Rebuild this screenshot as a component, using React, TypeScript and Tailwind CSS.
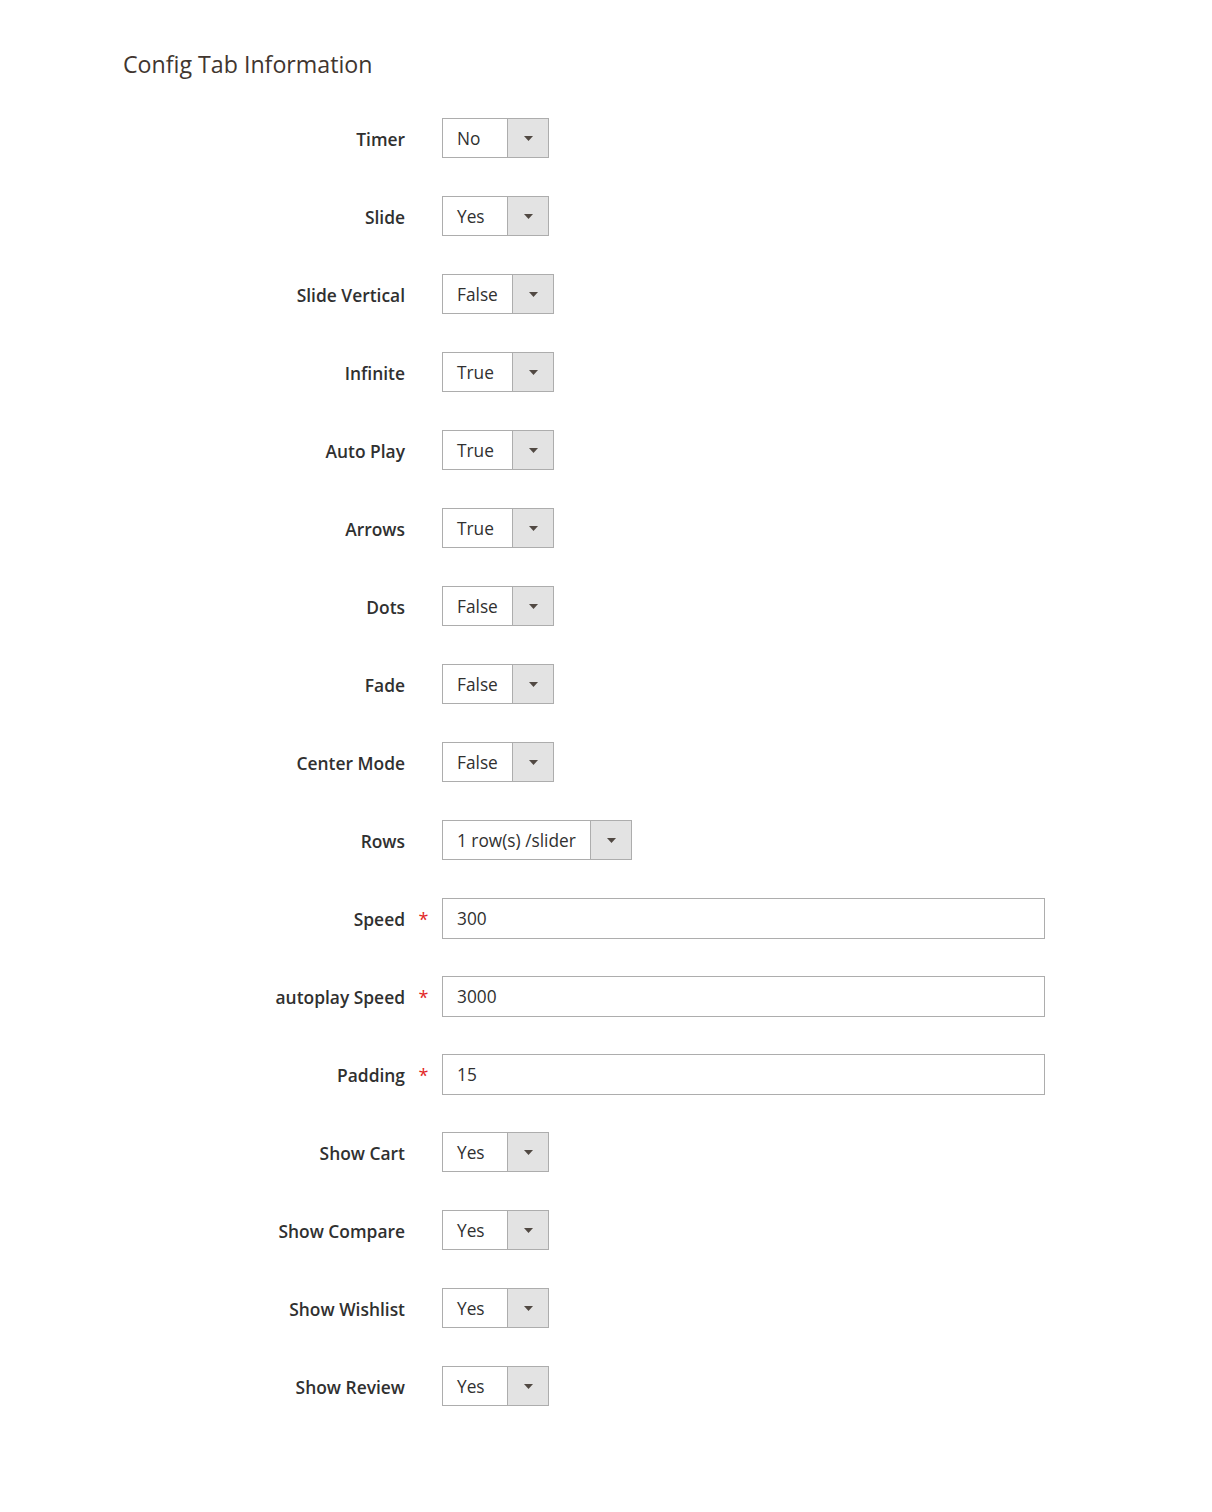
type Field =
  | { label: string; kind: 'select'; value: string; width: string }
  | { label: string; kind: 'input'; value: string; required?: boolean }

const YESNO = 'w-[107px]'
const TRUEFALSE = 'w-[112px]'

const fields: Field[] = [
  { label: 'Timer', kind: 'select', value: 'No', width: YESNO },
  { label: 'Slide', kind: 'select', value: 'Yes', width: YESNO },
  { label: 'Slide Vertical', kind: 'select', value: 'False', width: TRUEFALSE },
  { label: 'Infinite', kind: 'select', value: 'True', width: TRUEFALSE },
  { label: 'Auto Play', kind: 'select', value: 'True', width: TRUEFALSE },
  { label: 'Arrows', kind: 'select', value: 'True', width: TRUEFALSE },
  { label: 'Dots', kind: 'select', value: 'False', width: TRUEFALSE },
  { label: 'Fade', kind: 'select', value: 'False', width: TRUEFALSE },
  { label: 'Center Mode', kind: 'select', value: 'False', width: TRUEFALSE },
  { label: 'Rows', kind: 'select', value: '1 row(s) /slider', width: 'w-[190px]' },
  { label: 'Speed', kind: 'input', value: '300', required: true },
  { label: 'autoplay Speed', kind: 'input', value: '3000', required: true },
  { label: 'Padding', kind: 'input', value: '15', required: true },
  { label: 'Show Cart', kind: 'select', value: 'Yes', width: YESNO },
  { label: 'Show Compare', kind: 'select', value: 'Yes', width: YESNO },
  { label: 'Show Wishlist', kind: 'select', value: 'Yes', width: YESNO },
  { label: 'Show Review', kind: 'select', value: 'Yes', width: YESNO },
]

const SelectBox = ({ value, width }: { value: string; width: string }) => (
  <div className={`flex h-[40px] ${width} border border-[#adadad] bg-white`}>
    <div className="flex flex-1 items-center pl-[14px] pt-[2px] text-[17.3px] text-[#303030]">
      {value}
    </div>
    <div className="flex w-[41px] items-center justify-center border-l border-[#adadad] bg-[#e3e3e3] pt-[1px]">
      <svg width="9" height="5" viewBox="0 0 9 5">
        <path d="M0 0h9L4.5 5z" fill="#514943" />
      </svg>
    </div>
  </div>
)

const TextBox = ({ value }: { value: string }) => (
  <div className="flex h-[41px] w-[603px] shrink-0 items-center border border-[#adadad] bg-white pl-[14px] pt-[2px] text-[17.3px] text-[#303030]">
    {value}
  </div>
)

const App = () => {
  return (
    <div
      className="min-h-[1512px] bg-white pl-[123px] pt-[48px]"
      style={{ fontFamily: '"Open Sans", "Noto Sans", sans-serif' }}
    >
      <h2 className="text-[23.2px] leading-[32px] text-[#41362f]">
        Config Tab Information
      </h2>

      <div className="mt-[38px] flex flex-col gap-[38px]">
        {fields.map((field) => (
          <div key={field.label} className="flex h-[40px] items-center">
            <label className="w-[282px] pt-[2px] text-right text-[17.4px] font-semibold text-[#303030]">
              {field.label}
            </label>
            <div className="flex w-[37px] justify-center pt-[2px] text-[18px] text-[#e22626]">
              {field.kind === 'input' && field.required ? '*' : ''}
            </div>
            {field.kind === 'select' ? (
              <SelectBox value={field.value} width={field.width} />
            ) : (
              <TextBox value={field.value} />
            )}
          </div>
        ))}
      </div>
    </div>
  )
}

export default App
